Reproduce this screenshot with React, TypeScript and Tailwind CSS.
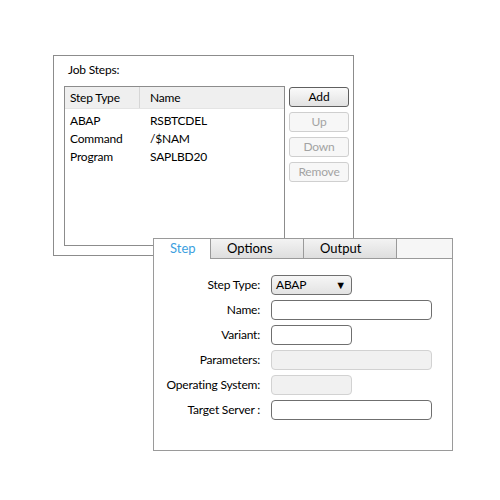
import React from "react";

const steps = [
  { type: "ABAP", name: "RSBTCDEL" },
  { type: "Command", name: "/$NAM" },
  { type: "Program", name: "SAPLBD20" },
];

const fields = [
  { label: "Step Type:", kind: "select", w: "w-[81px]" },
  { label: "Name:", kind: "input", w: "w-[161px]" },
  { label: "Variant:", kind: "input", w: "w-[81px]" },
  { label: "Parameters:", kind: "disabled", w: "w-[161px]" },
  { label: "Operating System:", kind: "disabled", w: "w-[81px]" },
  { label: "Target Server :", kind: "input", w: "w-[161px]" },
];

const SideButton = ({ label, enabled }: { label: string; enabled?: boolean }) => (
  <button
    className={
      enabled
        ? "h-[20px] w-[60px] rounded-[3px] border border-[#5f5f5f] bg-gradient-to-b from-[#fafafa] to-[#e2e2e2] text-[12px] leading-none text-black"
        : "h-[20px] w-[60px] rounded-[3px] border border-[#cfcfcf] bg-[#f7f7f7] text-[12px] leading-none text-[#a3a3a3]"
    }
  >
    {label}
  </button>
);

export default function App() {
  return (
    <div className="relative h-[500px] w-[500px] bg-white text-[12px] tracking-[-0.2px] text-black [font-family:Lato,'Open_Sans',sans-serif]">
      {/* Job steps window */}
      <div className="absolute left-[53px] top-[55px] h-[201px] w-[301px] border border-[#8c8c8c] bg-white">
        <div className="pl-[14px] pt-[7px] leading-[14px]">Job Steps:</div>
        <div className="mt-[9px] flex pl-[10px]">
          <div className="h-[160px] w-[221px] border border-[#8c8c8c]">
            <div className="flex h-[22px] items-center border-b border-[#e4e4e4] bg-[#efefef]">
              <div className="flex h-full w-[75px] items-center border-r border-[#d6d6d6] pl-[5px]">Step Type</div>
              <div className="pl-[10px]">Name</div>
            </div>
            <div className="pt-[3px]">
              {steps.map((s) => (
                <div key={s.type} className="flex h-[18px] items-center">
                  <div className="w-[75px] pl-[5px]">{s.type}</div>
                  <div className="pl-[10px]">{s.name}</div>
                </div>
              ))}
            </div>
          </div>
          <div className="ml-[4px] flex flex-col gap-[5px] pt-[1px]">
            <SideButton label="Add" enabled />
            <SideButton label="Up" />
            <SideButton label="Down" />
            <SideButton label="Remove" />
          </div>
        </div>
      </div>

      {/* Step details window */}
      <div className="absolute left-[153px] top-[238px] flex h-[213px] w-[300px] flex-col">
        <div className="flex h-[21px] text-[13px] tracking-normal">
          <div className="flex w-[58px] items-center border-l border-r border-t border-[#9a9a9a] bg-white pl-[16px] text-[#3d9fe0]">
            Step
          </div>
          <div className="flex w-[93px] items-center border-b border-r border-t border-[#9a9a9a] bg-gradient-to-b from-[#f3f3f3] to-[#dedede] pl-[16px]">
            Options
          </div>
          <div className="flex w-[93px] items-center border-b border-r border-t border-[#9a9a9a] bg-gradient-to-b from-[#f3f3f3] to-[#dedede] pl-[16px]">
            Output
          </div>
          <div className="flex-1 border-b border-r border-t border-[#9a9a9a] bg-[#f6f6f6]" />
        </div>
        <div className="flex-1 border-b border-l border-r border-[#9a9a9a] bg-white pt-[16px]">
          <div className="grid grid-cols-[106px_1fr] gap-x-[11px] gap-y-[5px]">
            {fields.map((f) => (
              <React.Fragment key={f.label}>
                <div className="flex h-[20px] items-center justify-end">{f.label}</div>
                {f.kind === "select" ? (
                  <div className={`${f.w} flex h-[20px] items-center justify-between rounded-[4px] border border-[#6f6f6f] bg-gradient-to-b from-[#f6f6f6] to-[#e3e3e3] pl-[4px] pr-[5px]`}>
                    <span>ABAP</span>
                    <span className="text-[11px]">▼</span>
                  </div>
                ) : f.kind === "input" ? (
                  <div className={`${f.w} h-[20px] rounded-[4px] border border-[#6f6f6f] bg-white`} />
                ) : (
                  <div className={`${f.w} h-[20px] rounded-[4px] border border-[#d2d2d2] bg-[#f1f1f1]`} />
                )}
              </React.Fragment>
            ))}
          </div>
        </div>
      </div>
    </div>
  );
}
